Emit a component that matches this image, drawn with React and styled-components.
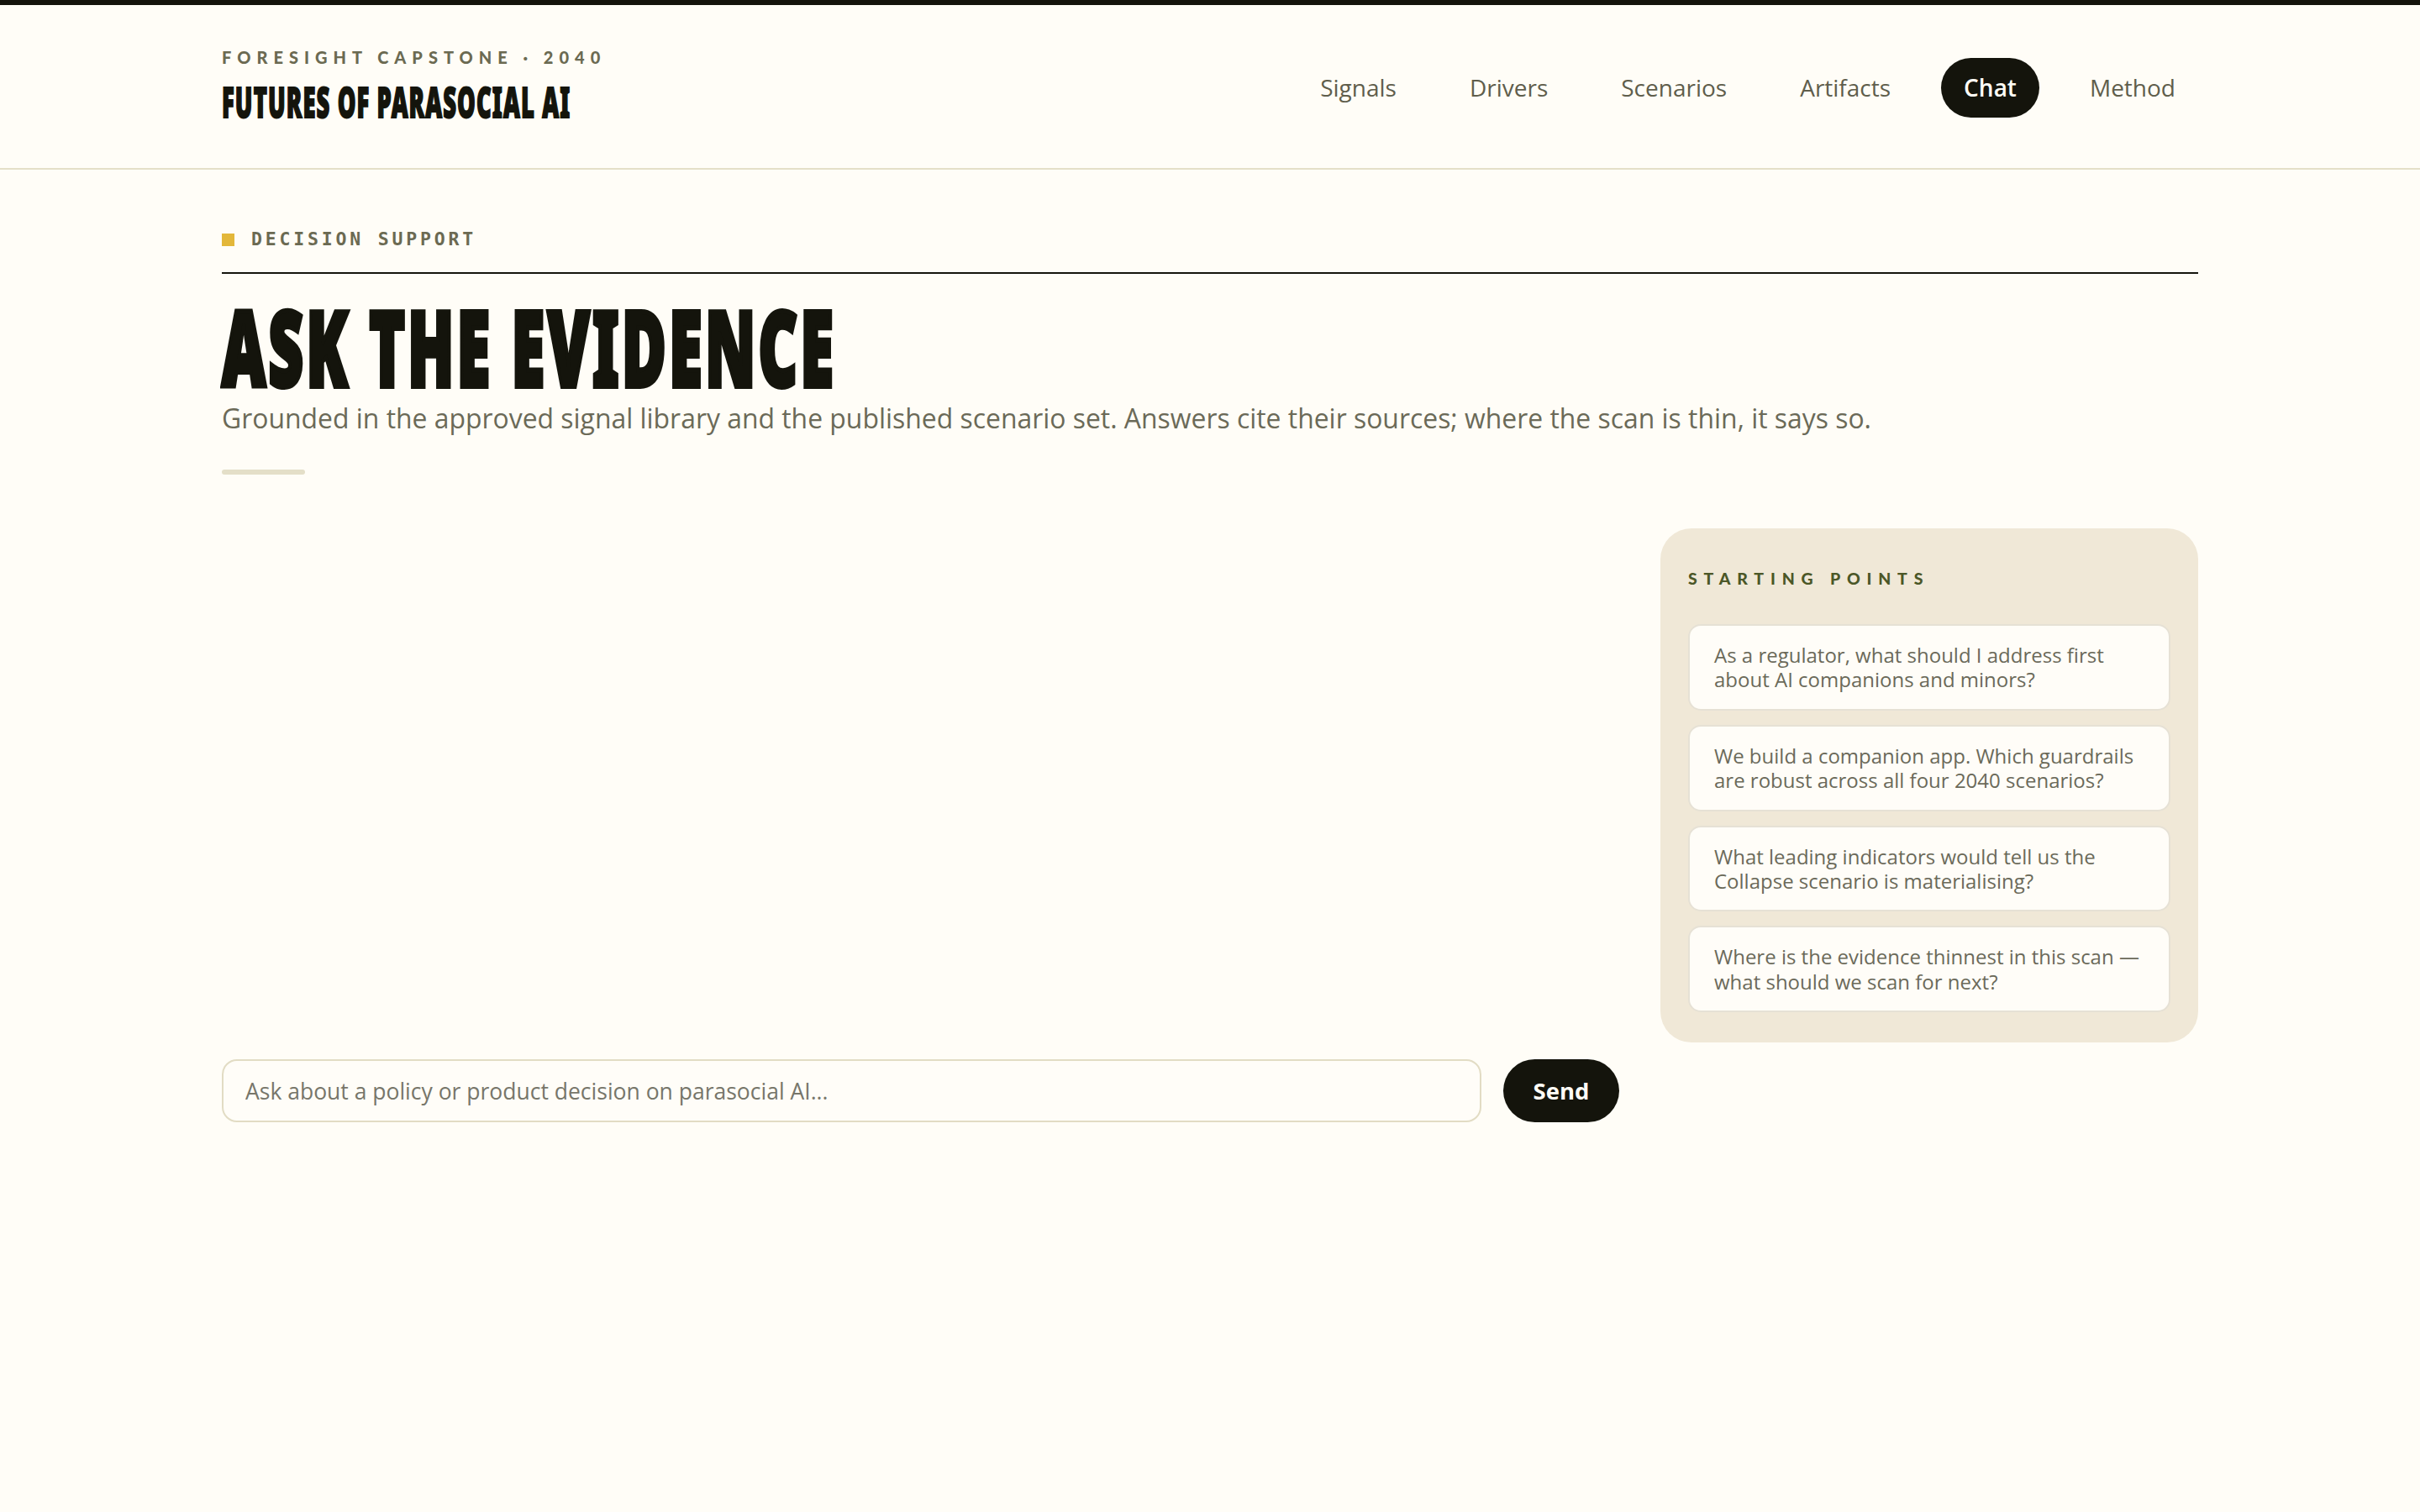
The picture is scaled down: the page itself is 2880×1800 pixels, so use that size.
import React from "react";
import styled, { createGlobalStyle } from "styled-components";

const GlobalStyle = createGlobalStyle`
  html, body {
    margin: 0;
    padding: 0;
    background: #fffdf7;
  }
  body {
    font-family: "Open Sans", "Noto Sans", sans-serif;
    color: #14140c;
  }
  *, *::before, *::after {
    box-sizing: border-box;
  }
`;

const Page = styled.div`
  min-height: 100vh;
  background: #fffdf7;
`;

const Header = styled.header`
  border-top: 6px solid #14140c;
  border-bottom: 2px solid #e4dfc8;
`;

const Container = styled.div`
  max-width: 2352px;
  margin: 0 auto;
`;

const HeaderBar = styled(Container)`
  display: flex;
  align-items: center;
  justify-content: space-between;
  padding: 50px 0 51px;
`;

const Brand = styled.div`
  display: flex;
  flex-direction: column;
  align-items: flex-start;
  gap: 13px;
`;

const Eyebrow = styled.div`
  font-family: "Lato", "Open Sans", sans-serif;
  font-weight: 900;
  font-size: 20px;
  line-height: 24px;
  letter-spacing: 7px;
  text-transform: uppercase;
  color: #6b6a52;
`;

/* Condensed display face: no condensed font is installed, so a heavy sans is narrowed */
const SiteTitle = styled.div`
  font-family: "Noto Sans", "Open Sans", sans-serif;
  font-weight: 900;
  font-size: 49px;
  line-height: 56px;
  letter-spacing: 2px;
  text-transform: uppercase;
  color: #14140c;
  -webkit-text-stroke: 2px #14140c;
  transform: scaleX(0.558);
  transform-origin: left center;
  white-space: nowrap;
`;

const Nav = styled.nav`
  display: flex;
  align-items: center;
  gap: 33px;
  padding-top: 3px;
`;

const NavLink = styled.a`
  display: inline-flex;
  align-items: center;
  height: 71px;
  padding: 0 27px;
  border-radius: 999px;
  font-size: 28px;
  font-weight: ${(p) => (p.$active ? 600 : 400)};
  color: ${(p) => (p.$active ? "#fffdf7" : "#5f5e4c")};
  background: ${(p) => (p.$active ? "#14140c" : "transparent")};
  text-decoration: none;
  cursor: pointer;
`;

const Main = styled(Container)`
  padding: 69px 0 120px;
`;

const Kicker = styled.div`
  display: flex;
  align-items: center;
  gap: 20px;
  padding-bottom: 25px;
  border-bottom: 2px solid #14140c;
  font-family: "DejaVu Sans Mono", "Liberation Mono", monospace;
  font-weight: 700;
  font-size: 21.5px;
  line-height: 28px;
  letter-spacing: 3.8px;
  text-transform: uppercase;
  color: #6b6a52;
`;

const KickerMark = styled.span`
  width: 15px;
  height: 15px;
  background: #e3b73a;
  flex: none;
`;

const Heading = styled.h1`
  margin: 31px 0 0;
  font-family: "Noto Sans", "Open Sans", sans-serif;
  font-weight: 900;
  font-size: 124px;
  line-height: 110px;
  letter-spacing: 6px;
  text-transform: uppercase;
  color: #14140c;
  -webkit-text-stroke: 6px #14140c;
  transform: scaleX(0.579);
  transform-origin: left center;
  white-space: nowrap;
`;

const Lede = styled.p`
  margin: 11px 0 0;
  font-size: 31.9px;
  line-height: 40px;
  color: #6b6a58;
`;

const Accent = styled.div`
  width: 99px;
  height: 6px;
  margin-top: 41px;
  border-radius: 3px;
  background: #e4dfc8;
`;

const Workspace = styled.div`
  display: grid;
  grid-template-columns: 1fr 640px;
  column-gap: 49px;
  align-items: start;
  margin-top: 64px;
`;

const ChatColumn = styled.section`
  display: flex;
  flex-direction: column;
  gap: 26px;
`;

const Thread = styled.div`
  min-height: 606px;
`;

const Composer = styled.form`
  display: flex;
  gap: 26px;
`;

const Input = styled.input`
  flex: 1;
  height: 75px;
  padding: 0 26px;
  border: 2px solid #e2dcc4;
  border-radius: 18px;
  background: #fffdf8;
  font-family: "Open Sans", sans-serif;
  font-size: 26.5px;
  color: #14140c;
  outline: none;
  &::placeholder {
    color: #77766a;
  }
`;

const SendButton = styled.button`
  width: 138px;
  height: 75px;
  border: none;
  border-radius: 38px;
  background: #14140c;
  color: #fffdf7;
  font-family: "Open Sans", sans-serif;
  font-weight: 700;
  font-size: 27.5px;
  cursor: pointer;
`;

const Panel = styled.aside`
  padding: 33px 33px 36px;
  border-radius: 37px;
  background: #f0e8d7;
`;

const PanelLabel = styled.h2`
  margin: 16px 0 43px;
  font-family: "Lato", "Open Sans", sans-serif;
  font-weight: 900;
  font-size: 19.5px;
  line-height: 22px;
  letter-spacing: 7.8px;
  text-transform: uppercase;
  color: #4b5727;
`;

const PromptList = styled.div`
  display: flex;
  flex-direction: column;
  gap: 17px;
`;

const PromptCard = styled.button`
  display: block;
  width: 100%;
  padding: 20px 29px;
  border: 2px solid #e6e1d5;
  border-radius: 15px;
  background: #fffdf8;
  text-align: left;
  font-family: "Open Sans", sans-serif;
  font-size: 24px;
  line-height: 29.4px;
  color: #6b6a5a;
  cursor: pointer;
`;

const navItems = ["Signals", "Drivers", "Scenarios", "Artifacts", "Chat", "Method"];

const prompts = [
  "As a regulator, what should I address first about AI companions and minors?",
  "We build a companion app. Which guardrails are robust across all four 2040 scenarios?",
  "What leading indicators would tell us the Collapse scenario is materialising?",
  "Where is the evidence thinnest in this scan — what should we scan for next?",
];

export default function App() {
  return (
    <Page>
      <GlobalStyle />
      <Header>
        <HeaderBar>
          <Brand>
            <Eyebrow>Foresight Capstone · 2040</Eyebrow>
            <SiteTitle>Futures of Parasocial AI</SiteTitle>
          </Brand>
          <Nav>
            {navItems.map((item) => (
              <NavLink key={item} $active={item === "Chat"}>
                {item}
              </NavLink>
            ))}
          </Nav>
        </HeaderBar>
      </Header>
      <Main>
        <Kicker>
          <KickerMark />
          Decision Support
        </Kicker>
        <Heading>Ask the Evidence</Heading>
        <Lede>
          Grounded in the approved signal library and the published scenario set. Answers cite
          their sources; where the scan is thin, it says so.
        </Lede>
        <Accent />
        <Workspace>
          <ChatColumn>
            <Thread />
            <Composer onSubmit={(e) => e.preventDefault()}>
              <Input placeholder="Ask about a policy or product decision on parasocial AI..." />
              <SendButton type="submit">Send</SendButton>
            </Composer>
          </ChatColumn>
          <Panel>
            <PanelLabel>Starting points</PanelLabel>
            <PromptList>
              {prompts.map((p) => (
                <PromptCard key={p} type="button">
                  {p}
                </PromptCard>
              ))}
            </PromptList>
          </Panel>
        </Workspace>
      </Main>
    </Page>
  );
}
